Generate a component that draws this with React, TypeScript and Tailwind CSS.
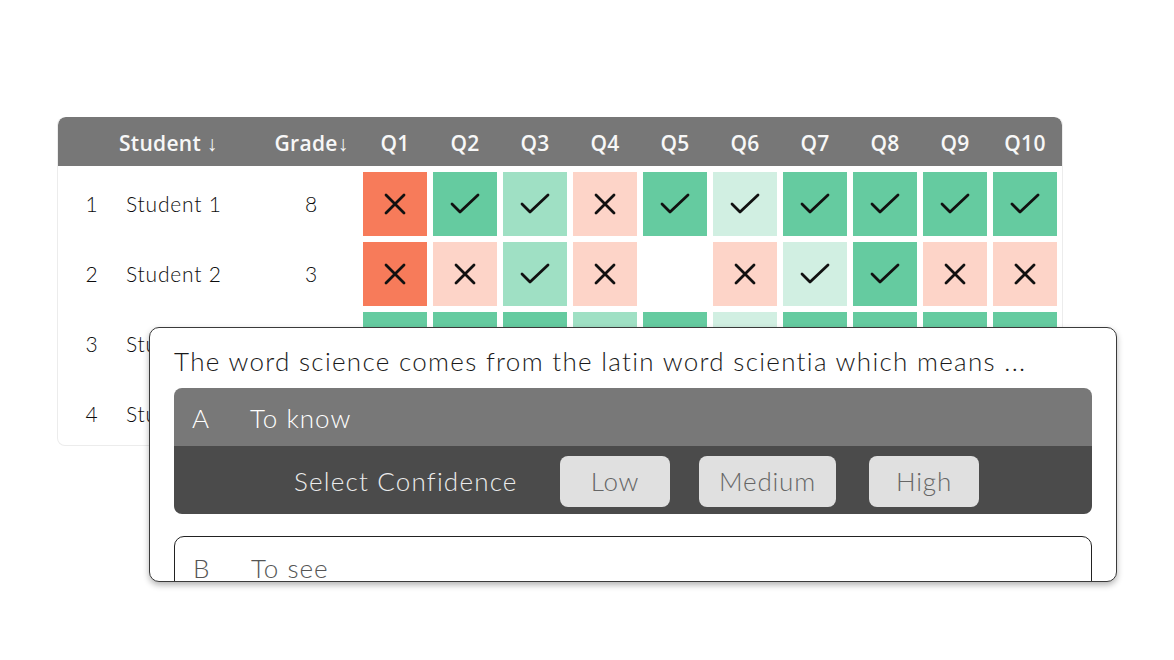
import clsx from 'clsx';

type Tone = 'bad' | 'wrong' | 'good' | 'mid' | 'light' | 'none';
type Cell = [Tone, 'x' | 'v' | ''];

const toneClass: Record<Tone, string> = {
  bad: 'bg-[#f77b5a]',
  wrong: 'bg-[#fdd4c8]',
  good: 'bg-[#65cba0]',
  mid: 'bg-[#9fe0c4]',
  light: 'bg-[#d1efe2]',
  none: 'bg-white',
};

const rows: { n: number; name: string; grade: number; cells: Cell[] }[] = [
  {
    n: 1,
    name: 'Student 1',
    grade: 8,
    cells: [
      ['bad', 'x'], ['good', 'v'], ['mid', 'v'], ['wrong', 'x'], ['good', 'v'],
      ['light', 'v'], ['good', 'v'], ['good', 'v'], ['good', 'v'], ['good', 'v'],
    ],
  },
  {
    n: 2,
    name: 'Student 2',
    grade: 3,
    cells: [
      ['bad', 'x'], ['wrong', 'x'], ['mid', 'v'], ['wrong', 'x'], ['none', ''],
      ['wrong', 'x'], ['light', 'v'], ['good', 'v'], ['wrong', 'x'], ['wrong', 'x'],
    ],
  },
  {
    n: 3,
    name: 'Student 3',
    grade: 9,
    cells: [
      ['good', 'v'], ['good', 'v'], ['good', 'v'], ['mid', 'v'], ['good', 'v'],
      ['light', 'v'], ['good', 'v'], ['good', 'v'], ['good', 'v'], ['good', 'v'],
    ],
  },
  {
    n: 4,
    name: 'Student 4',
    grade: 6,
    cells: [
      ['good', 'v'], ['wrong', 'x'], ['good', 'v'], ['good', 'v'], ['mid', 'v'],
      ['good', 'v'], ['wrong', 'x'], ['good', 'v'], ['light', 'v'], ['good', 'v'],
    ],
  },
];

function Mark({ kind }: { kind: 'x' | 'v' | '' }) {
  if (kind === 'x')
    return (
      <svg width="26" height="26" viewBox="0 0 26 26" fill="none" stroke="#111" strokeWidth="2.8" strokeLinecap="round">
        <path d="M4 4 22 22M22 4 4 22" />
      </svg>
    );
  if (kind === 'v')
    return (
      <svg width="32" height="28" viewBox="0 0 32 28" fill="none" stroke="#111" strokeWidth="2.8" strokeLinecap="round" strokeLinejoin="round">
        <path d="M3 14 11 22 29 5" />
      </svg>
    );
  return null;
}

const quick = "font-['Lato',sans-serif]";

export default function App() {
  return (
    <div className="relative min-h-[660px] w-[1174px] bg-white overflow-hidden">
      {/* Grade table */}
      <div className="ml-[57px] mt-[117px] w-[1006px] h-[329px] rounded-[8px] border border-[#ececec] border-t-0 bg-white overflow-hidden">
        <div className="flex h-[49px] items-center pt-[5px] bg-[#777777] rounded-t-[8px] text-[#f7f7f7] text-[21px] font-semibold tracking-[0.3px] font-['Open_Sans',sans-serif]">
          <div className="w-[61px]" />
          <div className="w-[144px]">Student ↓</div>
          <div className="w-[97px] text-center">Grade↓</div>
          {Array.from({ length: 10 }, (_, i) => (
            <div key={i} className="w-[70px] text-center">Q{i + 1}</div>
          ))}
        </div>
        <div className="pt-[3px]">
          {rows.map(r => (
            <div key={r.n} className={clsx('flex h-[70px] items-center text-[21px] font-light tracking-[0.8px] text-[#0d0d0d]', quick)}>
              <div className="w-[68px] text-center">{r.n}</div>
              <div className="w-[137px]">{r.name}</div>
              <div className="w-[97px] text-center">{r.grade}</div>
              {r.cells.map((c, i) => (
                <div key={i} className="w-[70px] flex justify-center">
                  <div className={clsx('w-[64px] h-[64px] flex items-center justify-center', toneClass[c[0]])}>
                    <Mark kind={c[1]} />
                  </div>
                </div>
              ))}
            </div>
          ))}
        </div>
      </div>

      {/* Question overlay */}
      <div
        className={clsx(
          'absolute left-[149px] top-[327px] w-[968px] h-[255px] rounded-[10px] border border-[#3a3a3a] bg-white overflow-hidden shadow-[0_3px_6px_rgba(0,0,0,0.3)] px-[24px]',
          quick
        )}
      >
        <p className="pt-[14px] h-[60px] text-[26px] font-light text-[#1a1a1a] tracking-[1.3px] whitespace-nowrap">
          The word science comes from the latin word scientia which means ...
        </p>
        <div className="w-[918px] rounded-[8px] overflow-hidden">
          <div className="flex h-[58px] items-center pt-[2px] bg-[#787878] text-[26px] font-light tracking-[1px] text-white">
            <span className="w-[76px] pl-[18px]">A</span>
            <span>To know</span>
          </div>
          <div className="flex h-[68px] items-start pt-[10px] bg-[#4b4b4b]">
            <span className="ml-[120px] mt-[6px] w-[266px] text-[26px] font-light tracking-[1.2px] text-[#ececec] whitespace-nowrap">Select Confidence</span>
            <button className="w-[110px] h-[51px] rounded-[8px] bg-[#e0e0e0] text-[26px] font-light tracking-[0.8px] text-[#666]">Low</button>
            <button className="ml-[29px] w-[137px] h-[51px] rounded-[8px] bg-[#e0e0e0] text-[26px] font-light tracking-[0.8px] text-[#666]">Medium</button>
            <button className="ml-[33px] w-[110px] h-[51px] rounded-[8px] bg-[#e0e0e0] text-[26px] font-light tracking-[0.8px] text-[#666]">High</button>
          </div>
        </div>
        <div className="mt-[22px] w-[918px] h-[70px] rounded-[10px] border border-[#222] flex items-start pt-[12px] text-[26px] font-light tracking-[1px] text-[#555]">
          <span className="w-[76px] pl-[18px]">B</span>
          <span>To see</span>
        </div>
      </div>
    </div>
  );
}
